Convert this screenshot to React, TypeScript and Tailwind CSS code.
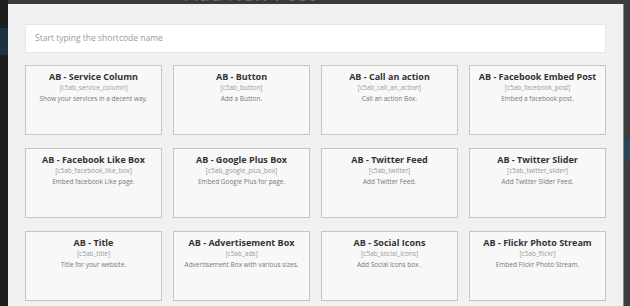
import React from "react";

const items = [
  ["AB - Service Column", "[c5ab_service_column]", "Show your services in a decent way."],
  ["AB - Button", "[c5ab_button]", "Add a Button."],
  ["AB - Call an action", "[c5ab_call_an_action]", "Call an action Box."],
  ["AB - Facebook Embed Post", "[c5ab_facebook_post]", "Embed a facebook post."],
  ["AB - Facebook Like Box", "[c5ab_facebook_like_box]", "Embed facebook Like page."],
  ["AB - Google Plus Box", "[c5ab_google_plus_box]", "Embed Google Plus for page."],
  ["AB - Twitter Feed", "[c5ab_twitter]", "Add Twitter Feed."],
  ["AB - Twitter Slider", "[c5ab_twitter_slider]", "Add Twitter Slider Feed."],
  ["AB - Title", "[c5ab_title]", "Title for your website."],
  ["AB - Advertisement Box", "[c5ab_ads]", "Advertisement Box with various sizes."],
  ["AB - Social Icons", "[c5ab_social_icons]", "Add Social icons box ."],
  ["AB - Flickr Photo Stream", "[c5ab_flickr]", "Embed Flickr Photo Stream."],
];

export default function App() {
  return (
    <div
      className="relative w-[630px] h-[306px] overflow-hidden bg-[#222222]"
      style={{ fontFamily: '"Open Sans", "Liberation Sans", sans-serif' }}
    >
      {/* background page */}
      <div className="absolute left-0 top-0 w-[8px] h-full bg-[#1e1e1e]">
        <div className="mt-[28px] h-[27px] bg-[#1d3340]" />
      </div>
      <div className="absolute right-0 top-0 w-[7px] h-full bg-[#3c3c3c]">
        <div className="mt-[139px] h-[22px] bg-[#2b4656]" />
      </div>
      <div className="absolute left-[8px] right-[7px] top-0 h-[5px] bg-[#3a3a3a]" />
      <div className="absolute left-[185px] top-[-16px] text-[20px] text-[#6a6a6a] leading-[20px]">
        Add New Post
      </div>

      {/* modal */}
      <div className="absolute left-[8px] right-[6px] top-[4px] bottom-0 bg-[#f1f1f1] border-r border-[#888] px-[17px] pt-[20px]">
        <div className="h-[29px] bg-white border border-[#e6e6e6] flex items-center pl-[9px] text-[8.5px] text-[#9a9a9a]">
          Start typing the shortcode name
        </div>
        <div className="mt-[12px] grid grid-cols-4 gap-x-[11px] gap-y-[13px]">
          {items.map(([t, s, d]) => (
            <div
              key={t}
              className="h-[70px] bg-[#f8f8f8] border border-[#c6c6c6] flex flex-col items-center pt-[5px] text-center leading-[11px]"
            >
              <div className="text-[9px] font-bold text-[#333]">{t}</div>
              <div className="text-[6.5px] text-[#9a9a9a]">{s}</div>
              <div className="text-[6.5px] text-[#777]">{d}</div>
            </div>
          ))}
        </div>
      </div>
    </div>
  );
}
